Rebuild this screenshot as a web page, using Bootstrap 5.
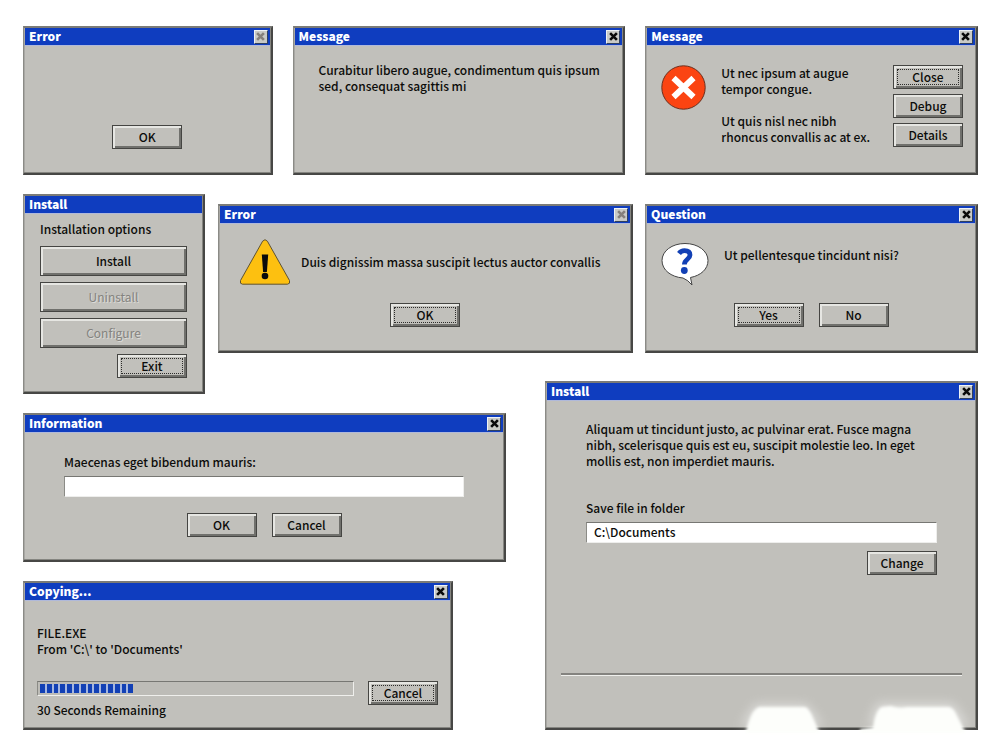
<!DOCTYPE html>
<html lang="en">
<head>
<meta charset="utf-8">
<meta name="viewport" content="width=device-width, initial-scale=1">
<title>Classic dialog windows</title>
<link href="https://cdn.jsdelivr.net/npm/bootstrap@5.3.0/dist/css/bootstrap.min.css" rel="stylesheet">
<style>
  :root { --face: #c1c0bb; --ink: #0c0c0a; --blue: #0f3dbf; }
  body {
    font-family: "Noto Sans CJK SC", "Noto Sans", sans-serif;
    font-size: 12px; line-height: 16px; font-weight: 500;
    color: var(--ink); background: #fff;
  }
  .desktop { padding: 26px 22px 20px 23px; }
  .top-row { gap: 20px; margin-bottom: 19px; }
  .grow-s { flex: 249 1 0; }
  .grow-m { flex: 333 1 0; }

  /* Staggered lower area */
  .stagger {
    display: grid;
    grid-template-columns: 182fr 13fr 288fr 39fr 88fr 12fr 333fr;
    grid-template-rows: minmax(159px, auto) 28px 13px 19px minmax(149px, auto) 19px minmax(149px, auto);
  }
  .at-options  { grid-area: 1 / 1 / 4 / 2; }
  .at-warning  { grid-area: 1 / 3 / 2 / 6; margin-top: 10px; }
  .at-question { grid-area: 1 / 7 / 2 / 8; margin-top: 10px; }
  .at-info     { grid-area: 5 / 1 / 6 / 4; }
  .at-copy     { grid-area: 7 / 1 / 8 / 4; width: 89%; }
  .at-folder   { grid-area: 3 / 5 / 8 / 8; }

  .win {
    display: flex; flex-direction: column; min-width: 0; min-height: 149px;
    position: relative;
    background: var(--face);
    border: 2px solid; border-color: #7b7b77 #474745 #474745 #8b8b86;
    border-left-width: 1px;
    box-shadow: inset -1px -1px 0 #858580, inset 1px 0 0 #a9a8a4;
  }
  .win-title {
    display: flex; align-items: center; justify-content: space-between;
    height: 17px; margin: 0 1px; padding: 0 2px 0 4px;
    background: var(--blue); box-shadow: 0 1px 0 #b0b9da;
  }
  .win-title h2 { margin: 0; color: #fff; font-size: 12px; line-height: 16px; font-weight: 900; align-self: flex-start; }
  .win-body { flex: 1; display: flex; flex-direction: column; }
  .win-x {
    width: 14px; height: 14px; padding: 0; display: flex; align-items: center; justify-content: center;
    background: #c9cac6; color: #0a0a0a; border: 1px solid; border-color: #eef2f6 #30405f #30405f #eef2f6;
  }
  .win-x:disabled { color: #85807c; }
  .win-x svg { display: block; }

  .btn-retro {
    --bs-btn-font-size: 12px; --bs-btn-line-height: 16px; --bs-btn-font-weight: 500;
    --bs-btn-color: var(--ink); --bs-btn-bg: var(--face);
    --bs-btn-hover-bg: #cbcac5; --bs-btn-hover-color: var(--ink);
    --bs-btn-disabled-color: #84837f; --bs-btn-disabled-bg: var(--face); --bs-btn-disabled-opacity: 1;
    --bs-btn-border-radius: 0; --bs-btn-border-color: #454542; --bs-btn-disabled-border-color: #454542;
    --bs-btn-padding-x: 0; --bs-btn-padding-y: 0;
    position: relative; width: 70px; height: 24px; padding-bottom: 1px;
    box-shadow: inset 2px 2px 0 #e6e6e2, inset -2px -2px 0 #70706c;
  }
  .btn-retro:disabled { text-shadow: 1px 1px 0 #dcdbd7; font-weight: 400; }
  .btn-wide { width: 100%; height: 30px; }
  .btn-focus::after { content: ""; position: absolute; inset: 3px; border: 1px dotted #2c2c2a; }

  .field {
    height: 21px; padding: 0 7px 2px; border-radius: 0; background: #fff; color: var(--ink);
    font-size: 12px; line-height: 16px; font-weight: 500;
    border: 1px solid; border-color: #777773 #eeeeec #eeeeec #8b8b86;
  }
  .meter {
    height: 15px; padding: 2px; border-radius: 0; background: #bdbcb7;
    border: 1px solid; border-color: #777773 #efefec #efefec #8b8b86;
  }
  .meter-fill { display: flex; gap: 2px; background: #a5b6e0; }
  .meter-fill i { flex: 1; background: #1240b5; }
  .groove { margin: auto 14px 52px 15px; border: 0; height: 3px; opacity: 1; border-top: 2px solid #84837f; border-bottom: 1px solid #f0f0ed; }

  .pad-msg     { padding: 17px 20px 17px 25px; }
  .pad-alert   { padding: 20px 13px 0 15px; gap: 15px; }
  .pad-warn    { padding: 16px 20px 0 20px; gap: 10px; }
  .pad-options { padding: 8px 16px 0 16px; gap: 6px; }
  .pad-options p { margin-bottom: 3px; }
  .pad-info    { padding: 22px 40px 0 40px; }
  .pad-copy    { padding: 25px 13px 0 13px; }
  .pad-folder  { padding: 21px 39px 0 40px; }
  .blurb { margin-bottom: 31px; }
  .gap-field { margin-bottom: 6px; }
  .gap-stack { gap: 5px; }
  .gap-pair { gap: 15px; }
  .gap-meter { gap: 14px; }
  .remaining { margin: 6px 0 0; }
  .erased { position: absolute; right: -3px; bottom: -5px; width: 264px; height: 42px; overflow: visible; pointer-events: none; }
</style>
</head>
<body>
<svg width="0" height="0" class="position-absolute" aria-hidden="true">
  <symbol id="x" viewBox="0 0 8 8"><path d="M1 1l6 6M7 1l-6 6" stroke="currentColor" stroke-width="2.3" fill="none"/></symbol>
</svg>

<main class="desktop">
  <div class="top-row d-flex">
    <section class="win grow-s">
      <header class="win-title"><h2>Error</h2><button class="win-x" disabled aria-label="Close window"><svg width="9" height="9"><use href="#x"/></svg></button></header>
      <div class="win-body align-items-center justify-content-end pb-4">
        <button class="btn btn-retro">OK</button>
      </div>
    </section>

    <section class="win grow-m">
      <header class="win-title"><h2>Message</h2><button class="win-x" aria-label="Close window"><svg width="9" height="9"><use href="#x"/></svg></button></header>
      <div class="win-body pad-msg"><p class="mb-0">Curabitur libero augue, condimentum quis ipsum sed, consequat sagittis mi</p></div>
    </section>

    <section class="win grow-m">
      <header class="win-title"><h2>Message</h2><button class="win-x" aria-label="Close window"><svg width="9" height="9"><use href="#x"/></svg></button></header>
      <div class="win-body flex-row align-items-start pad-alert">
        <svg class="flex-shrink-0" width="45" height="45" viewBox="0 0 45 45" aria-hidden="true">
          <circle cx="22.500" cy="22.500" r="21.700" fill="#fb4412" stroke="#6d2e1c" stroke-width="1"/>
          <path d="M12.500 13l20 19M32.500 13l-20 19" stroke="#fff" stroke-width="6"/>
        </svg>
        <div class="flex-grow-1">
          <p class="mb-3">Ut nec ipsum at augue<br>tempor congue.</p>
          <p class="mb-0">Ut quis nisl nec nibh<br>rhoncus convallis ac at ex.</p>
        </div>
        <div class="d-flex flex-column gap-stack">
          <button class="btn btn-retro btn-focus">Close</button>
          <button class="btn btn-retro">Debug</button>
          <button class="btn btn-retro">Details</button>
        </div>
      </div>
    </section>
  </div>

  <div class="stagger">
    <section class="win at-options">
      <header class="win-title"><h2>Install</h2></header>
      <div class="win-body pad-options">
        <p>Installation options</p>
        <button class="btn btn-retro btn-wide">Install</button>
        <button class="btn btn-retro btn-wide" disabled>Uninstall</button>
        <button class="btn btn-retro btn-wide" disabled>Configure</button>
        <button class="btn btn-retro btn-focus align-self-end">Exit</button>
      </div>
    </section>

    <section class="win at-warning">
      <header class="win-title"><h2>Error</h2><button class="win-x" disabled aria-label="Close window"><svg width="9" height="9"><use href="#x"/></svg></button></header>
      <div class="win-body justify-content-between pb-4">
        <div class="d-flex align-items-center pad-warn">
          <svg class="flex-shrink-0" width="52" height="46" viewBox="0 0 52 46" aria-hidden="true">
            <path d="M23.600 2.200Q26-.8 28.400 2.200L50.500 41.500Q51.500 45 48.500 45.200H3.500Q.5 45 1.500 41.500Z" fill="#fdc010" stroke="#5e5233" stroke-width="1"/>
            <path d="M22.800 15.500h6.400l-1.300 17.500h-3.800z" fill="#0b0b0b"/><circle cx="26" cy="37" r="3.300" fill="#0b0b0b"/>
          </svg>
          <p class="mb-0">Duis dignissim massa suscipit lectus auctor convallis</p>
        </div>
        <button class="btn btn-retro btn-focus align-self-center">OK</button>
      </div>
    </section>

    <section class="win at-question">
      <header class="win-title"><h2>Question</h2><button class="win-x" aria-label="Close window"><svg width="9" height="9"><use href="#x"/></svg></button></header>
      <div class="win-body justify-content-between pb-4">
        <div class="d-flex align-items-start pad-alert">
          <svg class="flex-shrink-0" width="48" height="44" viewBox="0 2 48 44" aria-hidden="true">
            <path d="M24 .5C11 .5 1 8 1 17.500 1 27 10 34 22 35Q27 37 31 42L29.500 34.500C40 32.500 47 26 47 17.500 47 8 37 .5 24 .5Z" transform="translate(0 2)" fill="#fff" stroke="#444" stroke-width="1"/>
            <path d="M18 12.500c1.500-2 3.300-2.800 5.500-2.800 3.800 0 5.500 1.900 5.500 4.400 0 4.200-5.600 4.200-5.600 9.300" stroke="#1240b5" stroke-width="4.800" fill="none"/>
            <circle cx="23.300" cy="29.500" r="3.400" fill="#1240b5"/>
          </svg>
          <p class="mb-0 mt-1">Ut pellentesque tincidunt nisi?</p>
        </div>
        <div class="d-flex justify-content-center gap-pair">
          <button class="btn btn-retro btn-focus">Yes</button>
          <button class="btn btn-retro">No</button>
        </div>
      </div>
    </section>

    <section class="win at-info">
      <header class="win-title"><h2>Information</h2><button class="win-x" aria-label="Close window"><svg width="9" height="9"><use href="#x"/></svg></button></header>
      <div class="win-body pad-info">
        <label class="gap-field" for="answer">Maecenas eget bibendum mauris:</label>
        <input class="form-control field" id="answer" type="text">
        <div class="d-flex justify-content-center gap-pair mt-3">
          <button class="btn btn-retro">OK</button>
          <button class="btn btn-retro">Cancel</button>
        </div>
      </div>
    </section>

    <section class="win at-copy">
      <header class="win-title"><h2>Copying...</h2><button class="win-x" aria-label="Close window"><svg width="9" height="9"><use href="#x"/></svg></button></header>
      <div class="win-body pad-copy">
        <p class="mb-4">FILE.EXE<br>From 'C:\' to 'Documents'</p>
        <div class="d-flex align-items-start gap-meter">
          <div class="flex-grow-1">
            <div class="progress meter" role="progressbar" aria-label="Copy progress" aria-valuenow="30" aria-valuemin="0" aria-valuemax="100">
              <div class="meter-fill" style="width: 30%"><i></i><i></i><i></i><i></i><i></i><i></i><i></i><i></i><i></i><i></i><i></i><i></i><i></i><i></i></div>
            </div>
            <p class="remaining">30 Seconds Remaining</p>
          </div>
          <button class="btn btn-retro btn-focus">Cancel</button>
        </div>
      </div>
    </section>

    <section class="win at-folder">
      <header class="win-title"><h2>Install</h2><button class="win-x" aria-label="Close window"><svg width="9" height="9"><use href="#x"/></svg></button></header>
      <div class="win-body">
        <div class="pad-folder d-flex flex-column">
          <p class="blurb">Aliquam ut tincidunt justo, ac pulvinar erat. Fusce magna nibh, scelerisque quis est eu, suscipit molestie leo. In eget mollis est, non imperdiet mauris.</p>
          <label class="gap-field" for="folder">Save file in folder</label>
          <input class="form-control field" id="folder" type="text" value="C:\Documents">
          <button class="btn btn-retro align-self-end mt-2">Change</button>
        </div>
        <hr class="groove">
      </div>
      <svg class="erased" viewBox="0 0 264 42" aria-hidden="true">
        <defs>
          <filter id="soft" x="-10%" y="-30%" width="120%" height="160%"><feGaussianBlur stdDeviation="1.5"/></filter>
          <filter id="haze" x="-20%" y="-60%" width="140%" height="220%"><feGaussianBlur stdDeviation="6"/></filter>
        </defs>
        <path d="M26 36L40 14H92L108 36ZM154 36L162 13H238L254 36Z" fill="#fff" opacity=".5" filter="url(#haze)"/>
        <path d="M30 42L34 30Q38 18 44 16H90Q94 17 98 27L105 42ZM145 42V38L158 36Q161 18 167 16L176 15Q184 18 192 16H234Q239 17 242 25L251 42Z" fill="#fdfefb" filter="url(#soft)"/>
      </svg>
    </section>
  </div>
</main>
<script src="https://cdn.jsdelivr.net/npm/bootstrap@5.3.0/dist/js/bootstrap.bundle.min.js"></script>
</body>
</html>
